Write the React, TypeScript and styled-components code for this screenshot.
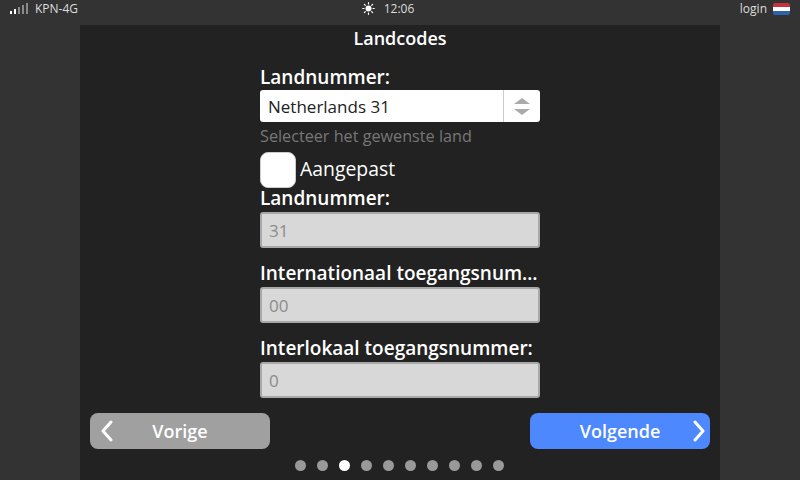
import React, { FunctionComponent } from "react";
import styled, { createGlobalStyle } from "styled-components";

const GlobalStyle = createGlobalStyle`
  html, body {
    margin: 0;
    padding: 0;
    width: 800px;
    height: 480px;
    overflow: hidden;
    background: #333333;
    font-family: "Open Sans", "Liberation Sans", sans-serif;
  }
  * { box-sizing: border-box; }
`;

type FieldProps = {
  label: string;
  value: string;
};

const Field: FunctionComponent<FieldProps> = ({ label, value }) => (
  <FieldBlock>
    <Label>{label}</Label>
    <DisabledInput>{value}</DisabledInput>
  </FieldBlock>
);

const SunIcon = () => (
  <svg width="13" height="13" viewBox="0 0 13 13">
    <circle cx="6.5" cy="6.5" r="3" fill="#fff" />
    <g stroke="#fff" strokeWidth="1.2" strokeLinecap="round">
      <path d="M6.5 .7v1.3M6.5 11v1.3M.7 6.5H2M11 6.5h1.3M2.4 2.4l.9.9M9.7 9.7l.9.9M2.4 10.6l.9-.9M9.7 3.3l.9-.9" />
    </g>
  </svg>
);

const Flag = () => (
  <svg width="17" height="12" viewBox="0 0 17 12">
    <clipPath id="flag">
      <rect width="17" height="12" rx="2" />
    </clipPath>
    <g clipPath="url(#flag)">
      <rect width="17" height="4" fill="#c8323f" />
      <rect y="4" width="17" height="4" fill="#ffffff" />
      <rect y="8" width="17" height="4" fill="#2f62ad" />
    </g>
  </svg>
);

const App: FunctionComponent = () => {
  const dots = [0, 1, 2, 3, 4, 5, 6, 7, 8, 9];

  return (
    <>
      <GlobalStyle />
      <Screen>
        <StatusBar>
          <StatusLeft>
            <SignalBars>
              {[3, 5, 7, 9, 11].map((h, i) => (
                <SignalBar key={h} $height={h} $on={i < 2} />
              ))}
            </SignalBars>
            KPN-4G
          </StatusLeft>
          <StatusCenter>
            <SunIcon />
            12:06
          </StatusCenter>
          <StatusRight>
            login
            <Flag />
          </StatusRight>
        </StatusBar>
        <Panel>
          <Title>Landcodes</Title>
          <Form>
            <Label $tight>Landnummer:</Label>
            <Select>
              <SelectValue>Netherlands 31</SelectValue>
              <SelectArrows>
                <ArrowUp />
                <ArrowDown />
              </SelectArrows>
            </Select>
            <Hint>Selecteer het gewenste land</Hint>
            <CheckRow>
              <CheckBox />
              <CheckLabel>Aangepast</CheckLabel>
            </CheckRow>
            <Label>Landnummer:</Label>
            <DisabledInput>31</DisabledInput>
            <Field label="Internationaal toegangsnummer:" value="00" />
            <Field label="Interlokaal toegangsnummer:" value="0" />
          </Form>
          <NavRow>
            <NavButton $primary={false}>
              <Chevron width="14" height="22" viewBox="0 0 14 22" $side="left">
                <path d="M11 2 3 11l8 9" />
              </Chevron>
              Vorige
            </NavButton>
            <NavButton $primary={true}>
              Volgende
              <Chevron width="14" height="22" viewBox="0 0 14 22" $side="right">
                <path d="M3 2l8 9-8 9" />
              </Chevron>
            </NavButton>
          </NavRow>
          <Dots>
            {dots.map((d) => (
              <Dot key={d} $active={d === 2} />
            ))}
          </Dots>
        </Panel>
      </Screen>
    </>
  );
};

// STYLED COMPONENTS //
const Screen = styled.div`
  width: 800px;
  height: 480px;
  display: flex;
  flex-direction: column;
  align-items: center;
  background: #333333;
`;
const StatusBar = styled.header`
  width: 100%;
  height: 25px;
  flex: none;
  display: grid;
  grid-template-columns: 1fr auto 1fr;
  align-items: center;
  padding: 0 10px 8px 10px;
  color: #dddddd;
  font-size: 12px;
  line-height: 17px;
`;
const StatusLeft = styled.div`
  display: flex;
  align-items: center;
  gap: 7px;
`;
const SignalBars = styled.div`
  display: flex;
  align-items: flex-end;
  gap: 2px;
  height: 11px;
`;
const SignalBar = styled.span<{ $height: number; $on: boolean }>`
  width: 2px;
  height: ${(p) => p.$height}px;
  background: ${(p) => (p.$on ? "#ffffff" : "#8a8a8a")};
`;
const StatusCenter = styled.div`
  display: flex;
  align-items: center;
  gap: 9px;
  margin-right: 24px;
`;
const StatusRight = styled.div`
  display: flex;
  align-items: center;
  justify-content: flex-end;
  gap: 6px;
`;
const Panel = styled.main`
  width: 640px;
  flex: 1;
  background: #222222;
  display: flex;
  flex-direction: column;
  align-items: center;
`;
const Title = styled.h1`
  margin: 0;
  height: 40px;
  padding-top: 1px;
  font-size: 18px;
  line-height: 24px;
  font-weight: 600;
  color: #ffffff;
`;
const Form = styled.div`
  width: 280px;
  display: flex;
  flex-direction: column;
`;
const FieldBlock = styled.div`
  display: flex;
  flex-direction: column;
  margin-top: 14px;
`;
const Label = styled.label<{ $tight?: boolean }>`
  display: block;
  height: 26px;
  font-size: 19px;
  line-height: 26px;
  font-weight: 600;
  color: #ffffff;
  white-space: nowrap;
  overflow: hidden;
  text-overflow: ellipsis;
  margin-top: ${(p) => (p.$tight ? -1 : -2)}px;
  margin-bottom: ${(p) => (p.$tight ? 0 : 1)}px;
`;
const Select = styled.div`
  height: 32px;
  display: flex;
  background: #ffffff;
  border-radius: 3px;
`;
const SelectValue = styled.div`
  flex: 1;
  padding-left: 8px;
  font-size: 17px;
  line-height: 33px;
  color: #222222;
`;
const SelectArrows = styled.div`
  width: 37px;
  display: flex;
  flex-direction: column;
  align-items: center;
  justify-content: center;
  gap: 5px;
  border-left: 1px solid #cccccc;
`;
const ArrowUp = styled.span`
  width: 0;
  height: 0;
  border-left: 8px solid transparent;
  border-right: 8px solid transparent;
  border-bottom: 6px solid #aaaaaa;
`;
const ArrowDown = styled.span`
  width: 0;
  height: 0;
  border-left: 8px solid transparent;
  border-right: 8px solid transparent;
  border-top: 6px solid #aaaaaa;
`;
const Hint = styled.div`
  height: 30px;
  font-size: 16.2px;
  line-height: 28px;
  color: #777777;
`;
const CheckRow = styled.div`
  display: flex;
  align-items: center;
  gap: 4px;
  height: 36px;
  margin-bottom: -1px;
`;
const CheckBox = styled.span`
  width: 36px;
  height: 36px;
  background: #ffffff;
  border: 1px solid #cccccc;
  border-radius: 8px;
`;
const CheckLabel = styled.span`
  font-size: 19.4px;
  line-height: 24px;
  margin-top: -2px;
  color: #ffffff;
`;
const DisabledInput = styled.div`
  height: 36px;
  padding-left: 7px;
  background: #d8d8d8;
  border: 2px solid #a8a8a8;
  border-radius: 3px;
  font-size: 17px;
  line-height: 34px;
  color: #8c8c8c;
`;
const NavRow = styled.div`
  width: 620px;
  display: flex;
  justify-content: space-between;
  margin-top: 15px;
`;
const NavButton = styled.div<{ $primary: boolean }>`
  position: relative;
  width: 180px;
  height: 36px;
  border-radius: 8px;
  background: ${(p) => (p.$primary ? "#4d88ff" : "#a0a0a0")};
  color: #ffffff;
  font-size: 18px;
  line-height: 36px;
  font-weight: 600;
  text-align: center;
`;
const Chevron = styled.svg<{ $side: "left" | "right" }>`
  position: absolute;
  top: 7px;
  ${(p) => p.$side}: ${(p) => (p.$side === "left" ? 10 : 4)}px;
  fill: none;
  stroke: #ffffff;
  stroke-width: 3;
  stroke-linecap: round;
  stroke-linejoin: round;
`;
const Dots = styled.div`
  display: flex;
  gap: 11px;
  margin: 11px 1px 0 0;
`;
const Dot = styled.span<{ $active: boolean }>`
  width: 11px;
  height: 11px;
  border-radius: 50%;
  background: ${(p) => (p.$active ? "#ffffff" : "#999999")};
`;

export default App;
